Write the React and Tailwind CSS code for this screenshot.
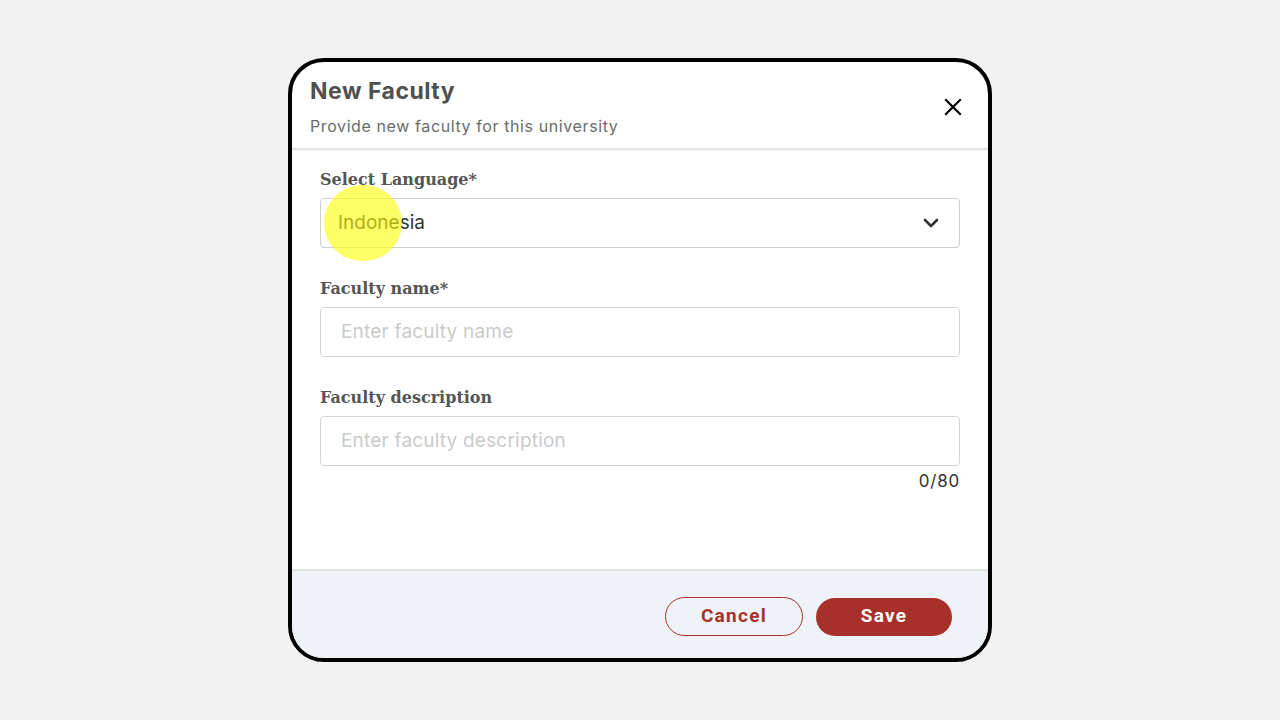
import React from "react";

export default function App() {
  return (
    <div className="w-[1280px] h-[720px] bg-[#f2f2f2] flex items-start justify-center pt-[58px]" style={{ fontFamily: "Inter, 'Liberation Sans', sans-serif" }}>
      <div className="w-[704px] h-[604px] border-[4px] border-black rounded-[36px] bg-white overflow-hidden flex flex-col">
        {/* Header */}
        <div className="h-[88px] shrink-0 flex items-start justify-between pl-[18px] pr-[24px] border-b-[2px] border-[#e4e4e4] shadow-[0_1px_2px_rgba(0,0,0,0.06)]">
          <div className="pt-[15px]">
            <div className="text-[23px] font-bold text-[#505050] leading-[28px] tracking-[0.5px]">New Faculty</div>
            <div className="mt-[10px] text-[16px] text-[#6b6b6b] leading-[22px] tracking-[0.6px]">Provide new faculty for this university</div>
          </div>
          <button className="mt-[34px] w-[22px] h-[22px] flex items-center justify-center text-black">
            <svg width="18" height="18" viewBox="0 0 18 18" fill="none" stroke="currentColor" strokeWidth="2.2" strokeLinecap="square">
              <path d="M2 2L16 16M16 2L2 16" />
            </svg>
          </button>
        </div>

        {/* Body */}
        <div className="flex-1 px-[28px] pt-[19px] flex flex-col">
          <label className="text-[16px] font-bold text-[#555] leading-[22px]" style={{ fontFamily: "'DejaVu Serif', 'Liberation Serif', serif" }}>Select Language*</label>
          <div className="relative mt-[7px] h-[50px] border border-[#cfcfcf] rounded-[4px] flex items-center justify-between pl-[17px] pr-[19px]">
            <span className="text-[19px] text-[#333]">Indonesia</span>
            <svg width="18" height="12" viewBox="0 0 18 12" fill="none" stroke="#333" strokeWidth="2.6" strokeLinecap="round" strokeLinejoin="round">
              <path d="M3 3L9 9L15 3" />
            </svg>
            <div className="absolute left-[3px] top-[-14px] w-[78px] h-[76px] rounded-full bg-[#ffff00]/60 pointer-events-none" />
          </div>

          <label className="mt-[30px] text-[16px] font-bold text-[#555] leading-[22px]" style={{ fontFamily: "'DejaVu Serif', 'Liberation Serif', serif" }}>Faculty name*</label>
          <div className="mt-[7px] h-[50px] border border-[#d4d4d4] rounded-[4px] flex items-center pl-[20px]">
            <span className="text-[19px] text-[#cacaca] tracking-[0.2px]">Enter faculty name</span>
          </div>

          <label className="mt-[30px] text-[16px] font-bold text-[#555] leading-[22px]" style={{ fontFamily: "'DejaVu Serif', 'Liberation Serif', serif" }}>Faculty description</label>
          <div className="mt-[7px] h-[50px] border border-[#d4d4d4] rounded-[4px] flex items-center pl-[20px]">
            <span className="text-[19px] text-[#cacaca] tracking-[0.2px]">Enter faculty description</span>
          </div>
          <div className="mt-[4px] text-right text-[17px] text-[#333] leading-[22px] tracking-[0.8px]">0/80</div>
        </div>

        {/* Footer */}
        <div className="h-[89px] shrink-0 bg-[#eff2f7] border-t-[2px] border-[#e2e2e2] flex items-center justify-end gap-[13px] pr-[36px] pt-[4px]">
          <button className="w-[138px] h-[39px] rounded-full border border-[#a8322a] text-[#a8322a] text-[19px] font-bold tracking-[1.3px]" style={{ fontFamily: "Roboto, 'Liberation Sans', sans-serif" }}>Cancel</button>
          <button className="w-[136px] h-[38px] rounded-full bg-[#a8302a] text-white text-[19px] font-bold tracking-[1.3px]" style={{ fontFamily: "Roboto, 'Liberation Sans', sans-serif" }}>Save</button>
        </div>
      </div>
    </div>
  );
}
